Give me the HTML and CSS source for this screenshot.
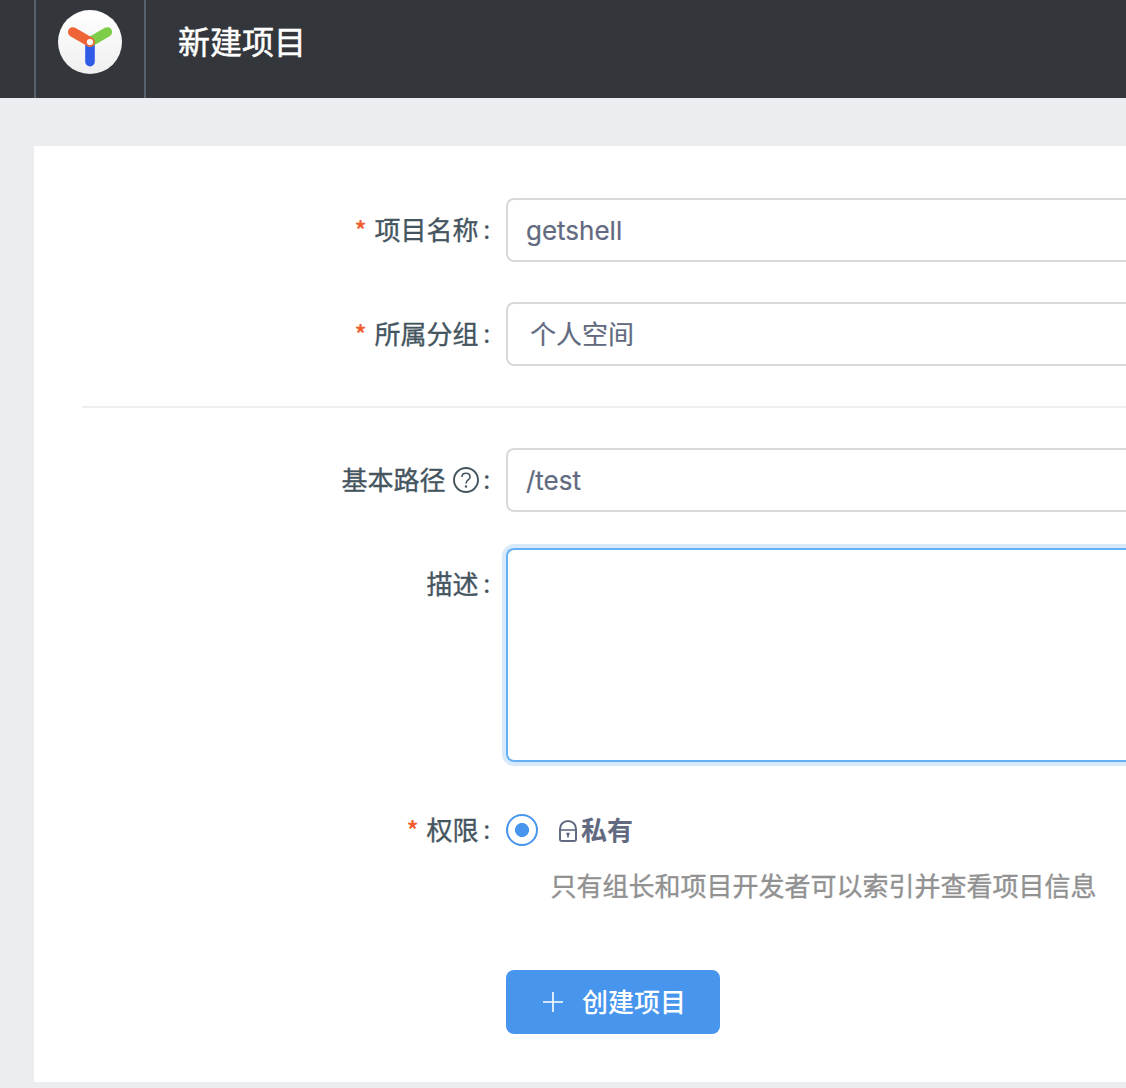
FILE: index.html
```html
<!DOCTYPE html>
<html lang="zh-CN">
<head>
<meta charset="utf-8">
<title>新建项目</title>
<link rel="stylesheet" href="styles.css">
</head>
<body>
<header class="header">
  <a class="logo">
    <svg width="64" height="64" viewBox="0 0 64 64">
      <defs>
        <linearGradient id="disc" x1="0" y1="0" x2="0" y2="1">
          <stop offset="0" stop-color="#ffffff"/>
          <stop offset="1" stop-color="#efeff0"/>
        </linearGradient>
      </defs>
      <circle cx="32" cy="32" r="32" fill="url(#disc)"/>
      <g fill="none" stroke-width="9.6" stroke-linecap="round">
        <path d="M32 32V51.7" stroke="#2f5be7"/>
        <path d="M32 32L49.3 22" stroke="#7dcd48"/>
        <path d="M32 32L14.8 22" stroke="#ef6437"/>
      </g>
      <circle cx="32" cy="32" r="3.1" fill="#fff"/>
    </svg>
  </a>
  <h1 class="title">新建项目</h1>
</header>
<main class="card">
  <form class="form">
    <div class="row">
      <label class="label"><span class="star">*</span><span class="name">项目名称</span><span class="colon">:</span></label>
      <div class="field">getshell</div>
    </div>
    <div class="row row-group">
      <label class="label"><span class="star">*</span><span class="name">所属分组</span><span class="colon">:</span></label>
      <div class="field field-select">个人空间</div>
    </div>
    <div class="divider"></div>
    <div class="row row-path">
      <label class="label"><span class="name">基本路径</span>
        <svg class="help" width="26" height="26" viewBox="0 0 26 26" fill="none" stroke="#455560">
          <circle cx="13" cy="13" r="12" stroke-width="1.9"/>
          <path d="M9 9.9C9 7.5 10.8 6.3 13 6.3S17 7.6 17 9.9C17 13 13 12.9 13 16.6" stroke-width="1.6"/>
          <circle cx="13" cy="19.5" r="1.2" fill="#455560" stroke="none"/>
        </svg>
        <span class="colon">:</span></label>
      <div class="field">/test</div>
    </div>
    <div class="row row-desc">
      <label class="label"><span class="name">描述</span><span class="colon">:</span></label>
      <div class="field textarea"></div>
    </div>
    <div class="row row-auth">
      <label class="label"><span class="star">*</span><span class="name">权限</span><span class="colon">:</span></label>
      <div class="choice">
        <span class="radio"></span>
        <svg class="lock" width="18" height="22" viewBox="0 0 18 22" fill="none" stroke="#616a80" stroke-width="2">
          <path d="M1 9V9C1 4.400 4.400 1 9 1S17 4.400 17 9V19.600Q17 21 15.600 21H2.400Q1 21 1 19.600Z"/>
          <path d="M1 10H17" stroke-width="1.600"/>
          <path d="M7.300 12.800H10.700V14.700H9.900V17.600H8.100V14.700H7.300Z" fill="#616a80" stroke="none"/>
        </svg>
        <span class="choice-name">私有</span>
      </div>
    </div>
    <p class="note">只有组长和项目开发者可以索引并查看项目信息</p>
    <button class="submit" type="button">
      <svg width="20" height="20" viewBox="0 0 20 20" stroke="#fff" stroke-width="1.600"><path d="M0 10H20M10 0V20"/></svg>
      <span>创建项目</span>
    </button>
  </form>
</main>
</body>
</html>
```
FILE: styles.css
```css
* { box-sizing: border-box; }
body {
  margin: 0;
  height: 1088px;
  overflow: hidden;
  background: #ecedf1;
  color: #455560;
  font: 26px/64px Inter, "Noto Sans CJK SC", sans-serif;
}
.header {
  display: flex;
  height: 98px;
  padding-left: 34px;
  background: #33363b;
}
.logo {
  width: 112px;
  padding: 10px 0 0 22px;
  border: solid #55626d;
  border-width: 0 2px;
}
.logo svg { display: block; }
.title {
  margin: 0 0 0 32px;
  color: #fff;
  font-size: 32px;
  font-weight: 400;
  line-height: 86px;
  -webkit-text-stroke: .5px;
}
.card {
  height: 936px;
  margin: 48px 0 0 34px;
  padding: 52px 0 0 48px;
  background: #fff;
}
.row {
  display: grid;
  grid-template-columns: 424px 1fr;
  white-space: nowrap;
}
.row-group { margin-top: 40px; }
.divider { height: 2px; margin: 40px 0; background: #eee; }
.label {
  display: flex;
  justify-content: flex-end;
  align-items: center;
  height: 64px;
}
.name {
  padding-top: 2px;
  -webkit-text-stroke: .35px;
}
.star {
  margin: 0 8px 2px 0;
  color: #f45e2e;
  font: 700 23px/62px "Noto Sans CJK SC", sans-serif;
}
.colon { width: 27.5px; padding-left: 4.5px; }
.help { margin: 0 0 0 7px; }
.field {
  height: 64px;
  padding-left: 18px;
  border: 2px solid #d9d9d9;
  border-right: 0;
  border-radius: 8px 0 0 8px;
  color: #616a80;
  line-height: 62px;
  -webkit-text-stroke: .2px;
}
.field-select { padding-left: 22px; line-height: 62px; }
.row-desc { margin-top: 36px; }
.row-desc .label { margin-top: 4px; }
.textarea {
  height: 214px;
  border-color: #64b1f6;
  box-shadow: 0 0 0 4px #d8e9fb;
}
.row-auth { margin-top: 36px; }
.choice { display: flex; align-items: center; height: 64px; color: #616a80; }
.radio {
  width: 32px;
  height: 32px;
  border: 2px solid #4795ec;
  border-radius: 50%;
  background: radial-gradient(circle, #4795ec 6.700px, transparent 7.300px);
}
.lock { margin: 1px 4px 0 21px; }
.choice-name { padding-top: 2px; font-weight: 700; }
.note {
  margin: 5px 0 0 468.5px;
  height: 40px;
  color: #919191;
  line-height: 40px;
  white-space: nowrap;
  -webkit-text-stroke: .35px;
}
.submit {
  display: flex;
  align-items: center;
  width: 214px;
  height: 64px;
  margin: 63px 0 0 424px;
  padding: 0 0 0 37px;
  gap: 19px;
  border: 0;
  border-radius: 8px;
  background: #4795ec;
  color: #fff;
  font: 500 26px/64px Inter, "Noto Sans CJK SC", sans-serif;
}
.submit span { padding-top: 2px; }
```
